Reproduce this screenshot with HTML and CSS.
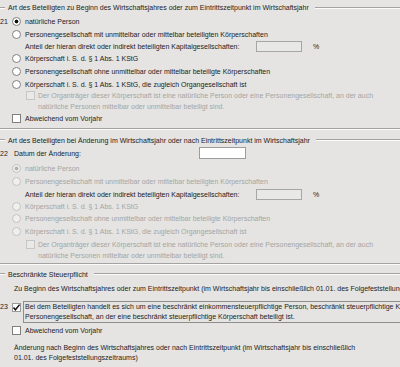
FILE: index.html
```html
<!DOCTYPE html>
<html lang="de">
<head>
  <meta charset="UTF-8">
  <title>Beteiligte</title>
  <link rel="stylesheet" href="styles.css">
</head>
<body>

  <div class="page">

    <!-- Zu Beginn des Wirtschaftsjahres -->
    <section class="group first">
      <div class="legend">
        <span class="rule rule-start"></span>
        <span class="legend-text">Art des Beteiligten zu Beginn des Wirtschaftsjahres oder zum Eintrittszeitpunkt im Wirtschaftsjahr</span>
        <span class="rule rule-end"></span>
      </div>

      <label class="row"><span class="num">21</span><input class="radio" type="radio" name="art1" checked>natürliche Person</label>
      <label class="row pad"><input class="radio" type="radio" name="art1">Personengesellschaft mit unmittelbar oder mittelbar beteiligten Körperschaften</label>
      <div class="row share">
        <span class="share-label">Anteil der hieran direkt oder indirekt beteiligten Kapitalgesellschaften:</span>
        <input class="field field-off" type="text">
        <span class="pct">%</span>
      </div>
      <label class="row pad"><input class="radio" type="radio" name="art1">Körperschaft i. S. d. § 1 Abs. 1 KStG</label>
      <label class="row pad"><input class="radio" type="radio" name="art1">Personengesellschaft ohne unmittelbar oder mittelbar beteiligte Körperschaften</label>
      <label class="row pad short"><input class="radio" type="radio" name="art1">Körperschaft i. S. d. § 1 Abs. 1 KStG, die zugleich Organgesellschaft ist</label>
      <div class="sub off">
        <span class="check check-off"></span>
        <span>Der Organträger dieser Körperschaft ist eine natürliche Person oder eine Personengesellschaft, an der auch<br>natürliche Personen mittelbar oder unmittelbar beteiligt sind.</span>
      </div>
      <label class="row pad"><span class="check"></span>Abweichend vom Vorjahr</label>
    </section>

    <!-- Änderung im Wirtschaftsjahr -->
    <section class="group second">
      <div class="legend">
        <span class="rule rule-start"></span>
        <span class="legend-text">Art des Beteiligten bei Änderung im Wirtschaftsjahr oder nach Eintrittszeitpunkt im Wirtschaftsjahr</span>
        <span class="rule rule-end"></span>
      </div>

      <div class="row date-row">
        <span class="num">22</span>
        <span class="date-label">Datum der Änderung:</span>
        <input class="field field-date" type="text">
      </div>
      <label class="row pad off gap"><input class="radio radio-off" type="radio" name="art2" checked disabled>natürliche Person</label>
      <label class="row pad off"><input class="radio radio-off" type="radio" name="art2" disabled>Personengesellschaft mit unmittelbar oder mittelbar beteiligten Körperschaften</label>
      <div class="row share tall">
        <span class="share-label">Anteil der hieran direkt oder indirekt beteiligten Kapitalgesellschaften:</span>
        <input class="field field-off" type="text">
        <span class="pct">%</span>
      </div>
      <label class="row pad off short"><input class="radio radio-off" type="radio" name="art2" disabled>Körperschaft i. S. d. § 1 Abs. 1 KStG</label>
      <label class="row pad off"><input class="radio radio-off" type="radio" name="art2" disabled>Personengesellschaft ohne unmittelbar oder mittelbar beteiligte Körperschaften</label>
      <label class="row pad off"><input class="radio radio-off" type="radio" name="art2" disabled>Körperschaft i. S. d. § 1 Abs. 1 KStG, die zugleich Organgesellschaft ist</label>
      <div class="sub off lift">
        <span class="check check-off"></span>
        <span>Der Organträger dieser Körperschaft ist eine natürliche Person oder eine Personengesellschaft, an der auch<br>natürliche Personen mittelbar oder unmittelbar beteiligt sind.</span>
      </div>
    </section>

    <!-- Beschränkte Steuerpflicht -->
    <section class="group third">
      <div class="legend">
        <span class="rule rule-start"></span>
        <span class="legend-text">Beschränkte Steuerpflicht</span>
        <span class="rule rule-end"></span>
      </div>

      <p class="note top-note">Zu Beginn des Wirtschaftsjahres oder zum Eintrittszeitpunkt (im Wirtschaftsjahr bis einschließlich 01.01. des Folgefeststellungszeitraums)</p>

      <div class="limited">
        <span class="num">23</span>
        <span class="check check-on">
          <svg width="9" height="9" viewBox="0 0 9 9"><path d="M1.5 4.6 L3.4 6.8 L7.6 1.6" fill="none" stroke="#111" stroke-width="1.5"/></svg>
        </span>
        <span class="focus-box">Bei dem Beteiligten handelt es sich um eine beschränkt einkommensteuerpflichtige Person, beschränkt steuerpflichtige Körperschaft oder eine<br>Personengesellschaft, an der eine beschränkt steuerpflichtige Körperschaft beteiligt ist.</span>
      </div>
      <label class="row pad"><span class="check"></span>Abweichend vom Vorjahr</label>

      <p class="note bottom-note">Änderung nach Beginn des Wirtschaftsjahres oder nach Eintrittszeitpunkt (im Wirtschaftsjahr bis einschließlich<br>01.01. des Folgefeststellungszeitraums)</p>
    </section>

  </div>

</body>
</html>
```

FILE: styles.css
```css
body {
  margin: 0;
  background: #e5e4e2;
  font-family: "Liberation Sans", Arial, sans-serif;
  font-size: 7px;
  color: #1c1c1c;
  overflow: hidden;
}

.page {
  width: 640px;
}

/* Groups (fieldset look) */
.group {
  border-bottom: 1px solid #a3a3a3;
  box-shadow: 0 1px 0 #fbfbfb;
}

.first {
  padding-bottom: 3px;
}

.second {
  margin-top: 4px;
  padding-bottom: 2px;
}

.third {
  margin-top: 3px;
}

.legend {
  display: flex;
  align-items: center;
  height: 15px;
  white-space: nowrap;
}

.second .legend,
.third .legend {
  height: 14px;
}

.rule {
  height: 0;
  border-top: 1px solid #a3a3a3;
  border-bottom: 1px solid #fbfbfb;
}

.rule-start {
  width: 5px;
}

.rule-end {
  flex: 1;
}

.legend-text {
  padding: 0 6px 0 3px;
}

/* Rows */
.row {
  display: flex;
  align-items: center;
  height: 13px;
  white-space: nowrap;
}

.row.short {
  height: 12px;
}

.row.gap {
  margin-top: 3px;
}

.num {
  width: 12px;
  flex: none;
}

.pad {
  padding-left: 12px;
}

.off {
  color: #a4a4a4;
}

/* Radios and checkboxes */
.radio {
  appearance: none;
  box-sizing: border-box;
  width: 9px;
  height: 9px;
  margin: 0 4px 0 0;
  border: 1px solid #808080;
  border-radius: 50%;
  background: #fff;
  flex: none;
}

.radio:checked {
  background: radial-gradient(circle, #111 0 1.7px, #fff 2.2px);
}

.radio-off {
  border-color: #c3c3c3;
  background: #efefee;
}

.radio-off:checked {
  background: radial-gradient(circle, #b0b0b0 0 1.7px, #efefee 2.2px);
}

.check {
  box-sizing: border-box;
  width: 9px;
  height: 9px;
  margin-right: 4px;
  border: 1px solid #808080;
  background: #fff;
  flex: none;
}

.check-off {
  border-color: #c6c6c6;
  background: #e9e9e8;
  margin-right: 3px;
}

.check-on {
  border-color: #9a9a9a;
  margin-right: 2px;
  margin-top: 2px;
}

.check-on svg {
  display: block;
  margin: -1px 0 0 -1px;
}

/* Share input row */
.share {
  height: 11px;
  padding-left: 25px;
}

.share.tall {
  height: 12px;
}

.share-label {
  width: 231px;
}

.field {
  box-sizing: border-box;
  width: 46px;
  height: 11px;
  margin: 0;
  padding: 0;
  border: 1px solid #a6a6a6;
  font: inherit;
}

.field-off {
  background: #e8e8e7;
}

.pct {
  margin-left: 11px;
}

.date-row {
  height: 12px;
}

.date-label {
  width: 185px;
  padding-left: 2px;
}

.field-date {
  width: 47px;
  height: 12px;
  background: #fff;
  border-color: #9c9c9c;
}

/* Organträger note */
.sub {
  display: flex;
  align-items: flex-start;
  padding-left: 26px;
  line-height: 11px;
  white-space: nowrap;
}

.sub .check {
  margin-top: 1px;
}

.sub.lift {
  margin-top: 1px;
}

/* Beschränkte Steuerpflicht */
.note {
  margin: 0;
  padding-left: 14px;
  white-space: nowrap;
}

.top-note {
  margin-top: 1px;
  line-height: 13px;
}

.limited {
  display: flex;
  align-items: flex-start;
  margin-top: 6px;
  white-space: nowrap;
}

.limited .num {
  line-height: 12px;
}

.focus-box {
  width: 600px;
  padding: 0 1px;
  border: 1px solid #8e8e8e;
  line-height: 10px;
}

.third .row {
  margin-top: 1px;
}

.bottom-note {
  margin-top: 6px;
  line-height: 10px;
  padding-bottom: 4px;
}
```
